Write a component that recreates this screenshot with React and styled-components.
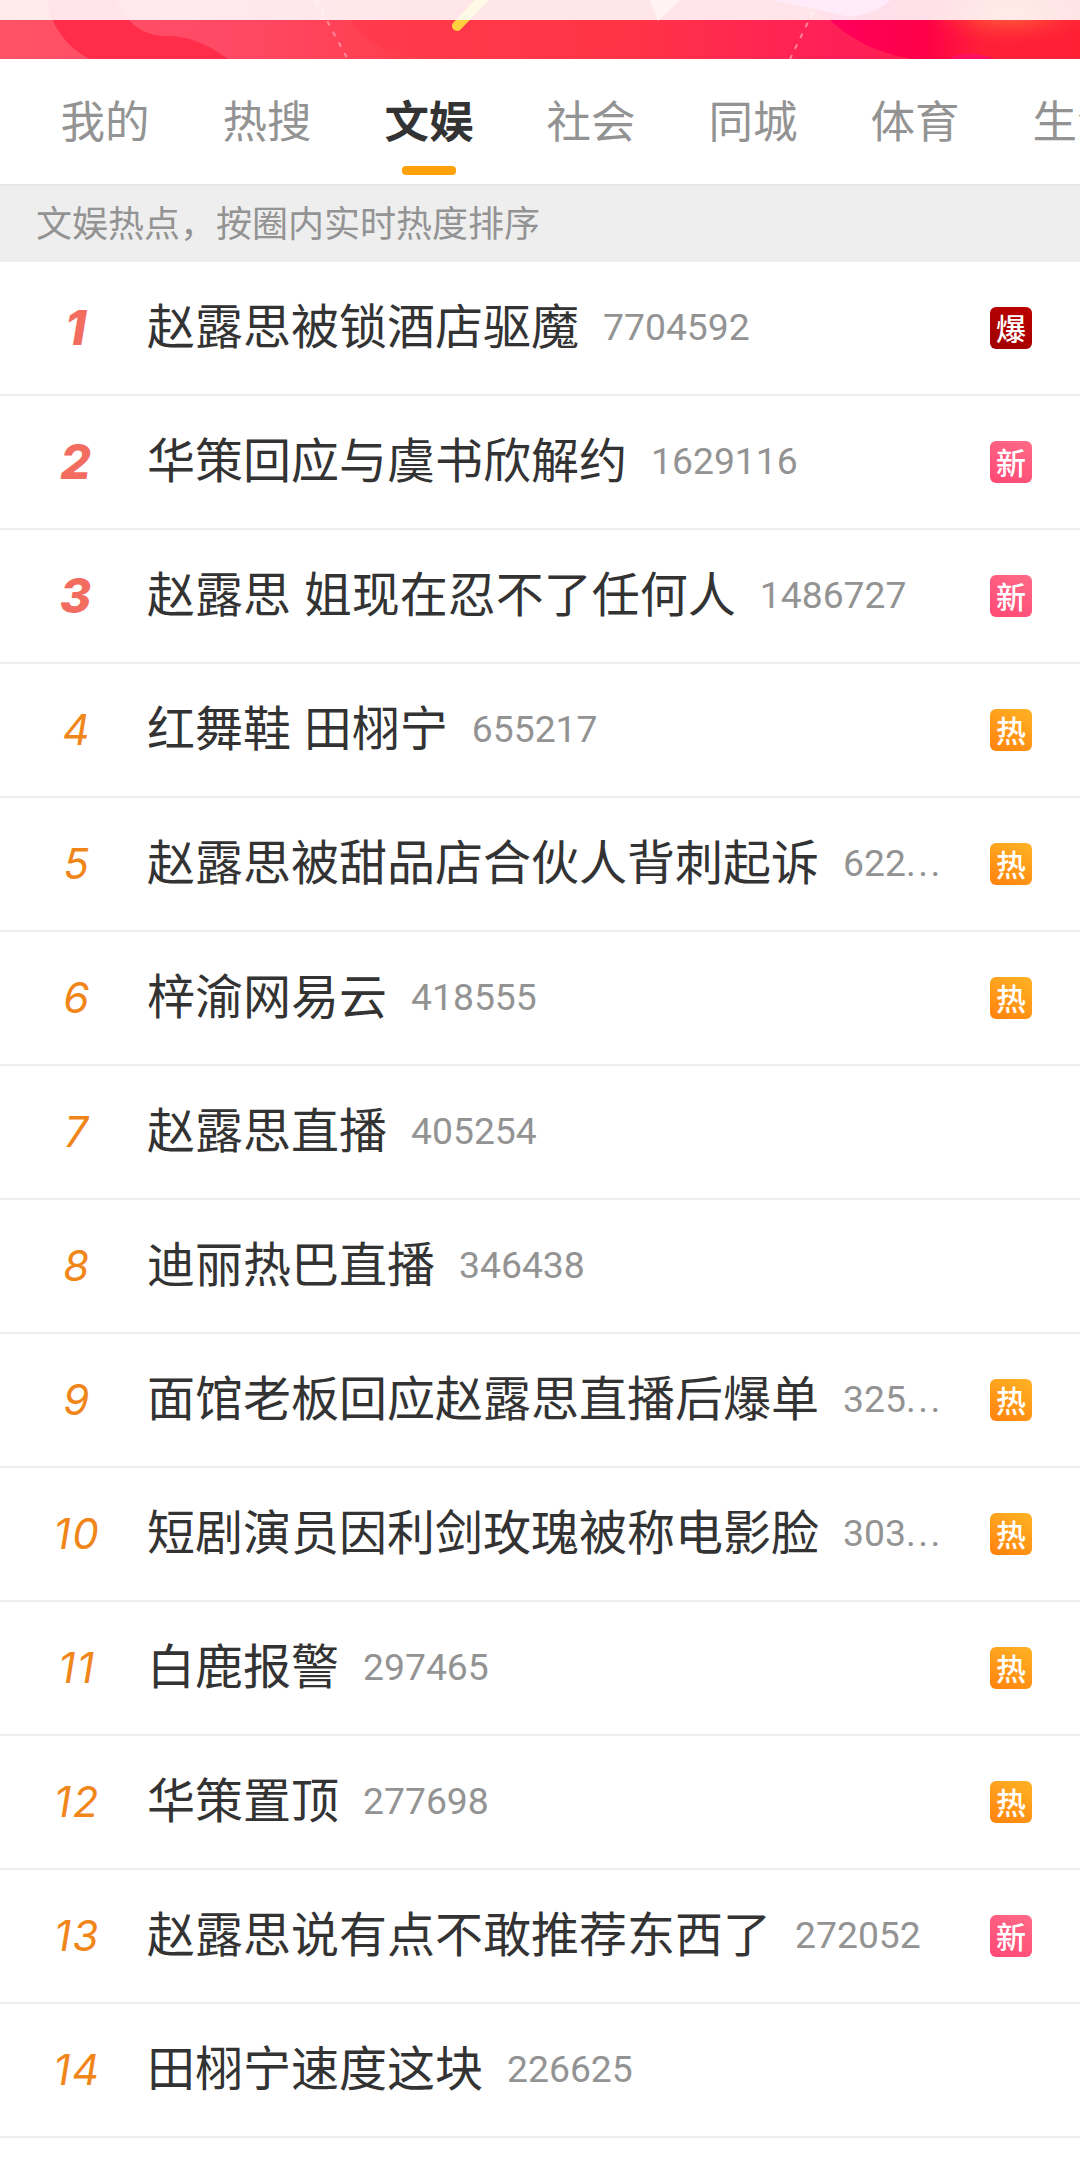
import React from 'react';
import styled, { createGlobalStyle } from 'styled-components';

const Global = createGlobalStyle`
  * { box-sizing: border-box; }
  body {
    margin: 0;
    background: #fff;
    font-family: "Noto Sans CJK SC", sans-serif;
  }
`;

const Page = styled.main`
  width: 1080px;
  height: 2163px;
  overflow: hidden;
  background: #fff;
`;

const BannerArt = styled.svg`
  display: block;
  width: 1080px;
  height: 59px;
`;

const Tabs = styled.nav`
  display: flex;
  height: 127px;
  padding-left: 24px;
  overflow: hidden;
  border-bottom: 2px solid #e6e6e6;
`;

const Tab = styled.div`
  flex: 0 0 162px;
  display: flex;
  flex-direction: column;
  align-items: center;
  padding-top: 28px;
  font-size: 44.5px;
  line-height: 64px;
  white-space: nowrap;
  font-weight: ${(p) => (p.$active ? 700 : 400)};
  color: ${(p) => (p.$active ? '#333' : '#939393')};
`;

const Underline = styled.span`
  width: 54px;
  height: 9px;
  margin-top: 15px;
  border-radius: 4px;
  background: #ffa20a;
`;

const Notice = styled.div`
  display: flex;
  align-items: center;
  height: 76px;
  padding: 0 36px 6px;
  background: #eee;
  color: #939393;
  font-size: 36px;
`;

const Row = styled.div`
  display: flex;
  align-items: center;
  height: 134px;
  padding-right: 48px;
  border-bottom: 2px solid #ededed;
`;

const Rank = styled.span`
  flex: 0 0 147px;
  padding: ${(p) => (p.$top ? '0 0 2px 4px' : '0 0 1px 7px')};
  font-family: Inter, sans-serif;
  font-style: italic;
  text-align: center;
  font-size: ${(p) => (p.$top ? 48 : 42)}px;
  font-weight: ${(p) => (p.$top ? 800 : 400)};
  letter-spacing: ${(p) => (p.$top ? 0 : 1.6)}px;
  color: ${(p) => (p.$top ? '#f26d5f' : '#f08519')};
`;

const Topic = styled.div`
  flex: 1;
  display: flex;
  align-items: center;
  gap: 24px;
  padding-bottom: 11px;
  white-space: nowrap;
`;

const Title = styled.span`
  font-size: 48px;
  line-height: 70px;
  word-spacing: 2px;
  color: #333;
`;

const Count = styled.span`
  padding-top: 8px;
  font-family: Roboto, sans-serif;
  font-size: 37.3px;
  line-height: 44px;
  color: #939393;
`;

const Dots = styled.span`
  letter-spacing: 2.5px;
`;

const fills = {
  爆: 'linear-gradient(25deg, #a00000, #bd0000)',
  新: 'linear-gradient(25deg, #ff4874, #ff6a88)',
  热: 'linear-gradient(25deg, #ff820c, #ffb326)',
};

const Badge = styled.span`
  display: flex;
  align-items: center;
  justify-content: center;
  width: 42px;
  height: 42px;
  padding-bottom: 2px;
  border-radius: 6px;
  background: ${(p) => fills[p.$kind]};
  color: #fff;
  font-size: 30px;
  line-height: 40px;
  font-weight: 500;
`;

const tabs = ['我的', '热搜', '文娱', '社会', '同城', '体育', '生活'];

const topics = [
  ['赵露思被锁酒店驱魔', '7704592', '爆'],
  ['华策回应与虞书欣解约', '1629116', '新'],
  ['赵露思 姐现在忍不了任何人', '1486727', '新'],
  ['红舞鞋 田栩宁', '655217', '热'],
  ['赵露思被甜品店合伙人背刺起诉', '622', '热', true],
  ['梓渝网易云', '418555', '热'],
  ['赵露思直播', '405254'],
  ['迪丽热巴直播', '346438'],
  ['面馆老板回应赵露思直播后爆单', '325', '热', true],
  ['短剧演员因利剑玫瑰被称电影脸', '303', '热', true],
  ['白鹿报警', '297465', '热'],
  ['华策置顶', '277698', '热'],
  ['赵露思说有点不敢推荐东西了', '272052', '新'],
  ['田栩宁速度这块', '226625'],
];

function Banner() {
  return (
    <BannerArt viewBox="0 0 1080 59">
      <defs>
        <linearGradient id="base" x1="0" x2="1">
          <stop offset="0" stopColor="#ff5266" />
          <stop offset=".2" stopColor="#ff4a66" />
          <stop offset=".38" stopColor="#ff3d4e" />
          <stop offset=".58" stopColor="#ff3346" />
          <stop offset=".78" stopColor="#ff1f58" />
          <stop offset="1" stopColor="#ff2038" />
        </linearGradient>
        <linearGradient id="magenta" x1="0" x2="1">
          <stop offset="0" stopColor="#ff0064" />
          <stop offset=".45" stopColor="#ff0048" />
          <stop offset=".65" stopColor="#ff2038" />
          <stop offset="1" stopColor="#ff2036" />
        </linearGradient>
        <radialGradient id="glow" cx="0.5" cy="0.5" r="0.5">
          <stop offset="0" stopColor="#ff6a3a" />
          <stop offset="1" stopColor="#ff3038" stopOpacity="0" />
        </radialGradient>
      </defs>
      <rect width="1080" height="59" fill="url(#base)" />
      <path d="M47 0C50 22 64 46 90 59H228C207 44 190 36 165 36C143 36 125 22 117 0Z" fill="#ff2d4a" />
      <path d="M350 20C365 44 395 59 440 59H560C600 50 640 36 650 20Z" fill="#ff3545" opacity=".5" />
      <path d="M800 0L830 20C855 43 880 53 912 59H1080V0Z" fill="url(#magenta)" />
      <path d="M948 59C960 52 978 52 995 59Z" fill="#ff1060" />
      <ellipse cx="1010" cy="13" rx="85" ry="32" fill="url(#glow)" />
      <path d="M316 0L347 58M813 12L790 59" fill="none" stroke="#ff8799" strokeWidth="2" strokeDasharray="5 7" />
      <path d="M457 26L485 -3" stroke="#ffcf40" strokeWidth="10" strokeLinecap="round" />
      <path d="M650 0L658 21L680 0Z" fill="#ff9aa0" />
      <path d="M772 0L850 17C870 14 886 6 890 0Z" fill="#ff58c8" />
      <rect width="1080" height="20" fill="#fff" opacity=".88" />
    </BannerArt>
  );
}

export default function App() {
  return (
    <Page>
      <Global />
      <Banner />
      <Tabs>
        {tabs.map((name) => (
          <Tab key={name} $active={name === '文娱'}>
            {name}
            {name === '文娱' && <Underline />}
          </Tab>
        ))}
      </Tabs>
      <Notice>文娱热点，按圈内实时热度排序</Notice>
      {topics.map(([title, count, badge, cut], i) => (
        <Row key={title}>
          <Rank $top={i < 3}>{i + 1}</Rank>
          <Topic>
            <Title>{title}</Title>
            <Count>
              {count}
              {cut && <Dots>...</Dots>}
            </Count>
          </Topic>
          {badge && <Badge $kind={badge}>{badge}</Badge>}
        </Row>
      ))}
    </Page>
  );
}
